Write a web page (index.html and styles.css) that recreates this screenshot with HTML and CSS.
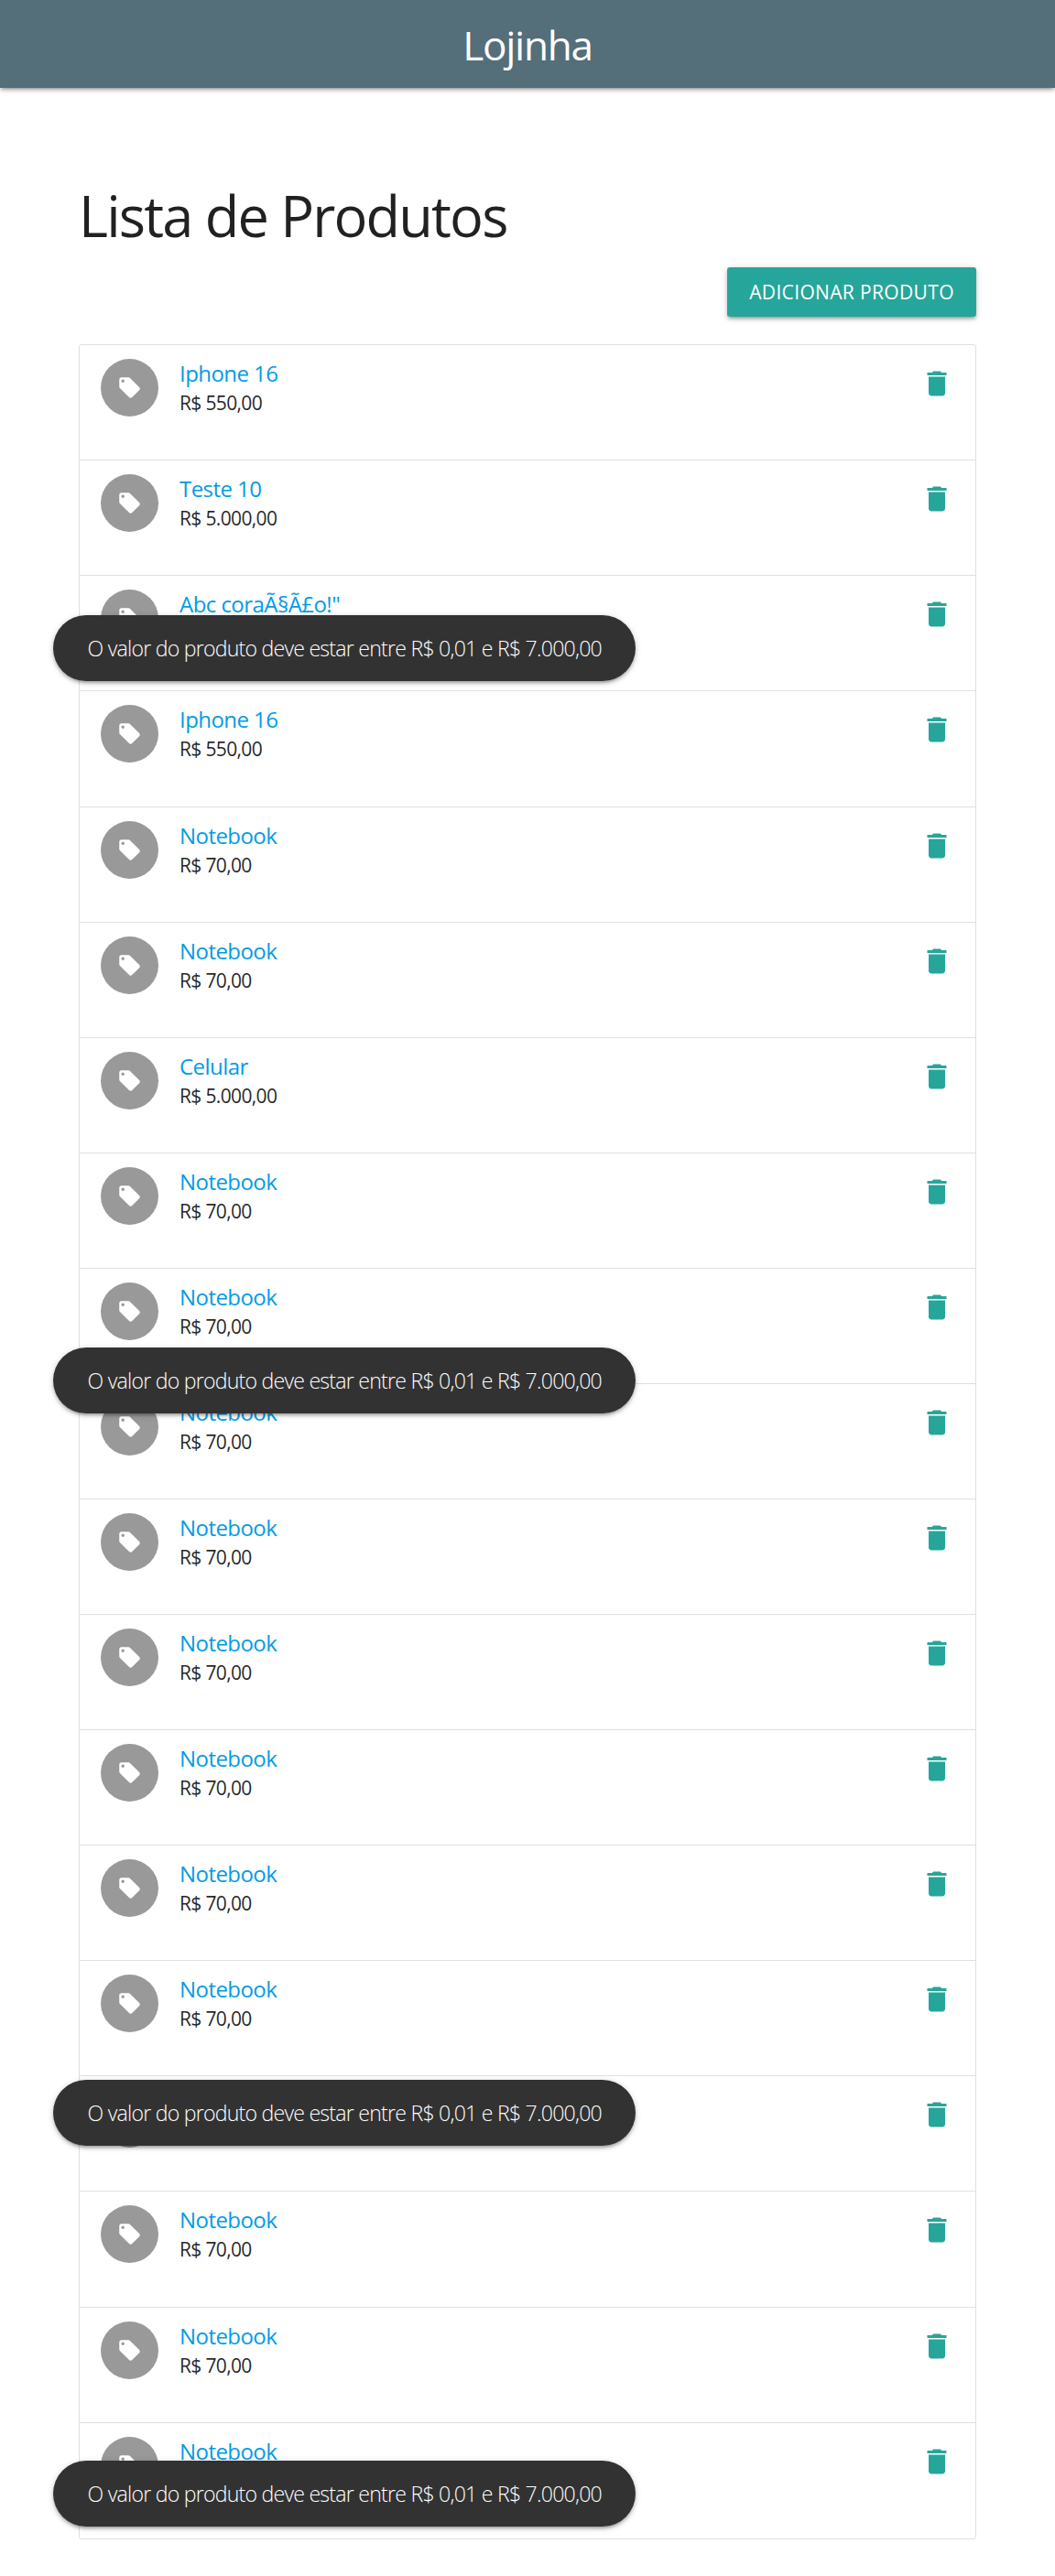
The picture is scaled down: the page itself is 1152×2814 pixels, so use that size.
FILE: index.html
```html
<!DOCTYPE html>
<html lang="pt-BR">
<head>
<meta charset="utf-8">
<title>Lojinha</title>
<link rel="stylesheet" href="styles.css">
</head>
<body>
<svg class="sprite" aria-hidden="true">
  <symbol id="tag" viewBox="0 0 24 24"><path d="M21.41 11.58l-9-9C12.05 2.22 11.55 2 11 2H4c-1.1 0-2 .9-2 2v7c0 .55.22 1.05.59 1.42l9 9c.36.36.86.58 1.41.58.55 0 1.05-.22 1.41-.59l7-7c.37-.36.59-.86.59-1.41 0-.55-.23-1.06-.59-1.42zM5.5 7C4.67 7 4 6.33 4 5.5S4.67 4 5.5 4 7 4.67 7 5.5 6.33 7 5.5 7z"/></symbol>
  <symbol id="trash" viewBox="0 0 24 24"><path d="M6 19c0 1.1.9 2 2 2h8c1.1 0 2-.9 2-2V7H6v12zM19 4h-3.5l-1-1h-5l-1 1H5v2h14V4z"/></symbol>
</svg>
<header class="navbar"><span class="brand">Lojinha</span></header>
<main class="container">
  <h1 class="title">Lista de Produtos</h1>
  <div class="actions"><button class="btn" type="button">Adicionar Produto</button></div>
  <ul class="collection" id="products"></ul>
</main>
<div class="toast toast-1">O valor do produto deve estar entre R$ 0,01 e R$ 7.000,00</div>
<div class="toast toast-2">O valor do produto deve estar entre R$ 0,01 e R$ 7.000,00</div>
<div class="toast toast-3">O valor do produto deve estar entre R$ 0,01 e R$ 7.000,00</div>
<div class="toast toast-4">O valor do produto deve estar entre R$ 0,01 e R$ 7.000,00</div>
<script src="app.js"></script>
</body>
</html>
```
FILE: styles.css
```css
* { box-sizing: border-box; }
body {
  margin: 0;
  position: relative;
  min-height: 2814px;
  background: #fff;
  color: rgba(0, 0, 0, .87);
  font: 21px/1.5 "Open Sans", "Noto Sans", sans-serif;
}
.sprite { position: absolute; width: 0; height: 0; }
.navbar, .btn, .toast {
  box-shadow: 0 3px 3px 0 rgba(0, 0, 0, .14), 0 4.5px 1.5px -3px rgba(0, 0, 0, .12), 0 1.5px 7.5px 0 rgba(0, 0, 0, .2);
}
.navbar {
  display: flex;
  justify-content: center;
  height: 96px;
  background: #546e7a;
  color: #fff;
}
.brand { font-size: 44.1px; line-height: 98px; letter-spacing: -1.25px; }
.container { width: 980px; margin: 0 auto; padding-top: 101px; }
.title {
  margin: 0;
  font-size: 61.3px;
  font-weight: 400;
  line-height: 76px;
  letter-spacing: -1.8px;
}
.actions { display: flex; justify-content: flex-end; padding-top: 19px; }
.btn {
  width: 272px;
  height: 54px;
  padding: 1px 0 0;
  border: 0;
  border-radius: 3px;
  background: #26a69a;
  color: #fff;
  font: 21px/53px "Open Sans", "Noto Sans", sans-serif;
  letter-spacing: .35px;
  text-transform: uppercase;
  white-space: nowrap;
}
.collection {
  list-style: none;
  margin: 30px 0 0;
  padding: 0;
  border: 1px solid #e0e0e0;
  border-radius: 3px;
}
.item {
  display: flex;
  height: 126px;
  padding: 15px 24px 0 23px;
  border-bottom: 1px solid #e0e0e0;
}
.item:nth-child(13n + 4) { height: 127px; }
.item:last-child { border-bottom: 0; }
.circle {
  display: flex;
  align-items: center;
  justify-content: center;
  width: 63px;
  height: 63px;
  border-radius: 50%;
  background: #999;
}
.circle svg { width: 27px; height: 27px; fill: #fff; }
.info { flex: 1; margin-left: 23px; }
.name {
  display: block;
  color: #039be5;
  font-size: 24px;
  line-height: 31.5px;
  letter-spacing: -.55px;
  text-decoration: none;
}
.price { margin: 1px 0 0; letter-spacing: -.65px; }
.delete { height: 36px; margin-top: 8.5px; }
.delete svg { display: block; width: 36px; height: 36px; fill: #26a69a; }
.toast {
  position: absolute;
  left: 58px;
  width: 636px;
  height: 72px;
  padding-left: 37.5px;
  border-radius: 36px;
  background: #323232;
  color: #fff;
  font-size: 23.1px;
  font-weight: 300;
  line-height: 73px;
  letter-spacing: -.76px;
  white-space: nowrap;
}
.toast-1 { top: 672px; }
.toast-2 { top: 1472px; }
.toast-3 { top: 2272px; }
.toast-4 { top: 2688px; }
```
FILE: app.js
```js
const notebook = ["Notebook", "R$ 70,00"];
const products = [
  ["Iphone 16", "R$ 550,00"],
  ["Teste 10", "R$ 5.000,00"],
  ["Abc coraÃ§Ã£o!\"", "R$ 70,00"],
  ["Iphone 16", "R$ 550,00"],
  notebook,
  notebook,
  ["Celular", "R$ 5.000,00"],
  ...Array(12).fill(notebook),
];

document.getElementById("products").innerHTML = products.map(([name, price]) => `
  <li class="item">
    <span class="circle"><svg><use href="#tag"/></svg></span>
    <div class="info"><a class="name" href="#">${name}</a><p class="price">${price}</p></div>
    <a class="delete" href="#" aria-label="Excluir"><svg><use href="#trash"/></svg></a>
  </li>`).join("");
```
